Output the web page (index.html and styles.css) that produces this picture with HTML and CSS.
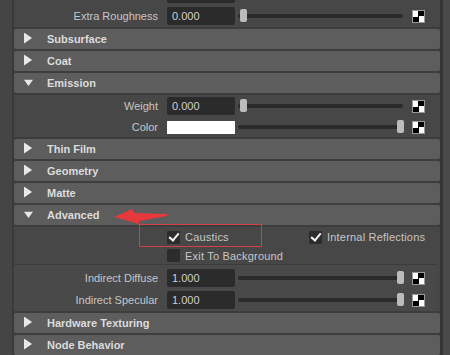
FILE: index.html
```html
<!DOCTYPE html>
<html lang="en">
<head>
    <meta charset="UTF-8">
    <meta name="viewport" content="width=device-width, initial-scale=1.0">
    <title>Attribute Editor</title>
    <link rel="stylesheet" href="styles.css">
</head>
<body>
    <div class="editor">
        <div class="gutter"></div>
        <div class="panel">
            <div class="body body-cut">
                <div class="row row-prev">
                    <span class="label"></span>
                    <span class="field"></span>
                </div>
                <div class="row">
                    <span class="label">Extra Roughness</span>
                    <span class="field">0.000</span>
                    <span class="slider"><span class="handle"></span></span>
                    <span class="checker"></span>
                </div>
            </div>

            <div class="head"><span class="tri tri-right"></span>Subsurface</div>
            <div class="head"><span class="tri tri-right"></span>Coat</div>
            <div class="head"><span class="tri tri-down"></span>Emission</div>
            <div class="body">
                <div class="row">
                    <span class="label">Weight</span>
                    <span class="field">0.000</span>
                    <span class="slider"><span class="handle"></span></span>
                    <span class="checker"></span>
                </div>
                <div class="row row-short">
                    <span class="label">Color</span>
                    <span class="swatch"></span>
                    <span class="slider"><span class="handle end"></span></span>
                    <span class="checker"></span>
                </div>
            </div>

            <div class="head"><span class="tri tri-right"></span>Thin Film</div>
            <div class="head"><span class="tri tri-right"></span>Geometry</div>
            <div class="head"><span class="tri tri-right"></span>Matte</div>
            <div class="head"><span class="tri tri-down"></span>Advanced</div>
            <div class="body">
                <div class="check-row">
                    <span class="check-cell"><span class="box on"></span>Caustics</span>
                    <span class="check-cell"><span class="box on"></span>Internal Reflections</span>
                </div>
                <div class="check-row check-row-short">
                    <span class="check-cell"><span class="box"></span>Exit To Background</span>
                </div>
                <div class="group">
                    <div class="row">
                        <span class="label">Indirect Diffuse</span>
                        <span class="field">1.000</span>
                        <span class="slider"><span class="handle end"></span></span>
                        <span class="checker"></span>
                    </div>
                    <div class="row">
                        <span class="label">Indirect Specular</span>
                        <span class="field">1.000</span>
                        <span class="slider"><span class="handle end"></span></span>
                        <span class="checker"></span>
                    </div>
                </div>
            </div>

            <div class="head"><span class="tri tri-right"></span>Hardware Texturing</div>
            <div class="head"><span class="tri tri-right"></span>Node Behavior</div>
        </div>
        <div class="scrollbar"></div>
    </div>

    <!-- annotation drawn over the panel -->
    <div class="note-box"></div>
    <svg class="note-arrow" width="60" height="20" viewBox="0 0 60 20">
        <polygon points="0,9 18,1 20,5 53,6 53,8 25,13 25,16" fill="#e5393c"/>
    </svg>
</body>
</html>
```

FILE: styles.css
```css
body {
    margin: 0;
    width: 450px;
    height: 355px;
    overflow: hidden;
    background-color: #444444;
    font-family: "Liberation Sans", Arial, sans-serif;
    font-size: 11px;
    color: #c6c6c6;
}

.editor {
    display: flex;
    height: 355px;
}

.gutter {
    width: 12px;
    border-right: 2px solid #3a3a3a;
    background: #454545;
}

.panel {
    width: 426px;
    background: #3d3d3d;
    overflow: hidden;
}

.scrollbar {
    width: 7px;
    border-left: 3px solid #363636;
    background: #4a4a4a;
}

/* frame bodies */

.body {
    background: #474747;
    margin-bottom: 2px;
}

.body-cut {
    margin-top: -17px;
}

.row {
    display: flex;
    align-items: center;
    height: 22px;
}

.row-short {
    height: 20px;
}

.label {
    width: 144px;
    margin-right: 9px;
    text-align: right;
    white-space: nowrap;
}

.field {
    box-sizing: border-box;
    width: 68px;
    height: 18px;
    line-height: 18px;
    padding-left: 5px;
    background: #2b2b2b;
    border-radius: 2px;
    color: #cfcfcf;
}

.swatch {
    width: 68px;
    height: 13px;
    background: #ffffff;
}

.slider {
    position: relative;
    width: 165px;
    height: 14px;
    margin-left: 3px;
}

.slider::before {
    content: "";
    position: absolute;
    left: 0;
    right: 0;
    top: 5px;
    height: 4px;
    border-radius: 2px;
    background: #2a2a2a;
}

.handle {
    position: absolute;
    left: 2px;
    top: 0;
    width: 7px;
    height: 13px;
    border-radius: 2px;
    background: #bcbcbc;
}

.handle.end {
    left: auto;
    right: -1px;
}

.checker {
    width: 11px;
    height: 11px;
    margin-left: 9px;
    border: 1px solid #9a9a9a;
    background: conic-gradient(#000 0 25%, #fff 0 50%, #000 0 75%, #fff 0);
}

/* collapsible headers */

.head {
    display: flex;
    align-items: center;
    height: 20px;
    margin-bottom: 2px;
    padding-left: 10px;
    background: #5d5d5d;
    border-radius: 2px;
    font-weight: bold;
    color: #dcdcdc;
}

.tri {
    width: 9px;
    height: 11px;
    margin-right: 14px;
    background: #e8e8e8;
}

.tri-right {
    margin-top: -2px;
    clip-path: polygon(0 0, 90% 50%, 0 100%);
}

.tri-down {
    clip-path: polygon(0 20%, 100% 20%, 50% 78%);
}

/* checkboxes */

.check-row {
    display: flex;
    align-items: center;
    height: 20px;
    padding-left: 153px;
}

.check-row-short {
    height: 17px;
}

.check-cell {
    display: flex;
    flex: none;
    align-items: center;
    width: 142px;
    white-space: nowrap;
    letter-spacing: 0.2px;
}

.check-cell + .check-cell {
    width: auto;
}

.box {
    position: relative;
    width: 13px;
    height: 13px;
    margin-right: 5px;
    border-radius: 1px;
    background: #2c2c2c;
}

.box.on::after {
    content: "";
    position: absolute;
    left: 4px;
    top: 0px;
    width: 4px;
    height: 8px;
    border-right: 2px solid #f2f2f2;
    border-bottom: 2px solid #f2f2f2;
    transform: rotate(40deg);
}

.group {
    margin-right: 3px;
    border-top: 1px solid #3b3b3b;
    padding-top: 2px;
    background: #494949;
}

/* red annotation */

.note-box {
    position: absolute;
    left: 139px;
    top: 224px;
    width: 121px;
    height: 21px;
    border: 1px solid #d2404a;
}

.note-arrow {
    position: absolute;
    left: 114px;
    top: 208px;
}
```
